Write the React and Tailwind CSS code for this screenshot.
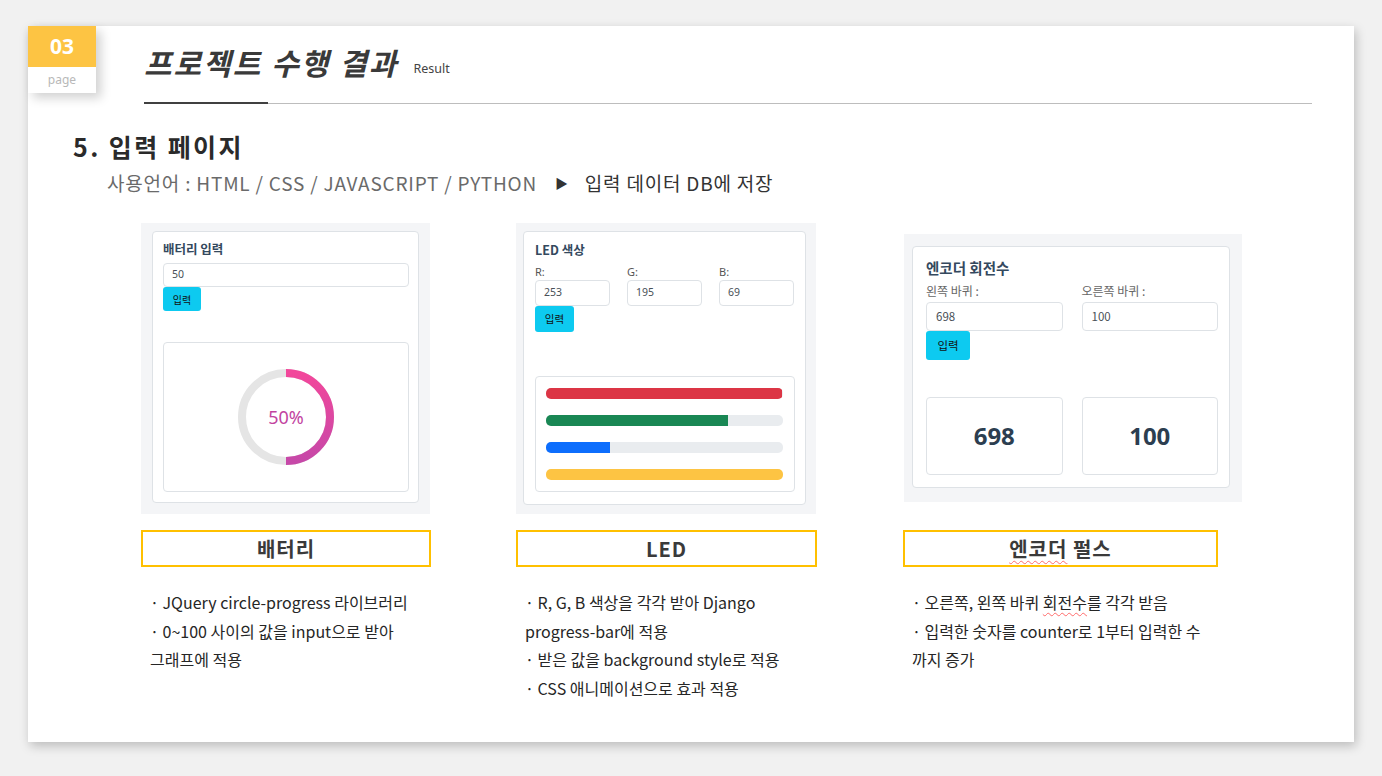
import React from 'react';

const kr = { fontFamily: '"Noto Sans CJK KR", "Noto Sans", sans-serif' };
const ui = { fontFamily: '"Noto Sans", "Noto Sans CJK KR", sans-serif' };

const Field = ({ value, className = '' }) => (
  <div className={`flex items-center border border-[#dee2e6] rounded-[4px] bg-white text-[#495057] ${className}`}>
    {value}
  </div>
);

const Button = ({ className = '' }) => (
  <div className={`flex items-center justify-center bg-[#0dcaf0] rounded-[3px] text-[#111] ${className}`} style={kr}>입력</div>
);

const BatteryPanel = () => (
  <div className="w-[289px] h-[291px] bg-[#f4f5f7] pt-[8px] pl-[11px]" style={ui}>
    <div className="w-[267px] h-[272px] bg-white border border-[#dee2e6] rounded-[4px] pt-[8px] px-[10px]">
      <div className="text-[12.5px] font-bold text-[#34495e] leading-[18px]" style={kr}>배터리 입력</div>
      <Field value="50" className="mt-[5px] w-[246px] h-[24px] pl-[8px] text-[10.5px]" />
      <Button className="w-[38px] h-[24px] text-[10px]" />
      <div className="mt-[31px] w-[246px] h-[150px] border border-[#dee2e6] rounded-[4px] flex items-center justify-center">
        <div className="relative w-[96px] h-[96px]">
          <svg width="96" height="96" viewBox="0 0 96 96">
            <defs>
              <linearGradient id="pinkg" x1="0" y1="0" x2="0" y2="1">
                <stop offset="0" stopColor="#f2479b" />
                <stop offset="1" stopColor="#c648a8" />
              </linearGradient>
            </defs>
            <circle cx="48" cy="48" r="44" fill="none" stroke="#e5e5e5" strokeWidth="8" />
            <path d="M48 4 A44 44 0 0 1 48 92" fill="none" stroke="url(#pinkg)" strokeWidth="8" />
          </svg>
          <div className="absolute inset-0 flex items-center justify-center text-[18px] text-[#c2439f]">50%</div>
        </div>
      </div>
    </div>
  </div>
);

const Bar = ({ color, pct }) => (
  <div className="h-[11px] w-[237px] rounded-[5px] bg-[#e9ecef] overflow-hidden">
    <div className={`h-full ${color}`} style={{ width: `${pct}%` }} />
  </div>
);

const LedPanel = () => (
  <div className="w-[300px] h-[291px] bg-[#f4f5f7] pt-[8px] pl-[7px]" style={ui}>
    <div className="w-[283px] h-[274px] bg-white border border-[#dee2e6] rounded-[4px] pt-[9px] px-[11px]">
      <div className="text-[12.5px] font-bold text-[#34495e] leading-[18px]" style={kr}>LED 색상</div>
      <div className="mt-[4px] grid grid-cols-3 gap-x-[17px] w-[259px] text-[11px] text-[#555]">
        {[['R:', '253'], ['G:', '195'], ['B:', '69']].map(([l, v]) => (
          <div key={l}>
            <div className="leading-[17px]">{l}</div>
            <Field value={v} className="h-[26px] pl-[8px] text-[10.5px]" />
          </div>
        ))}
      </div>
      <Button className="w-[39px] h-[26px] text-[10.5px]" />
      <div className="mt-[44px] w-[260px] h-[116px] border border-[#dee2e6] rounded-[4px] pt-[11px] pl-[10px] flex flex-col gap-[16px]">
        <Bar color="bg-[#dc3545]" pct={99.5} />
        <Bar color="bg-[#198754]" pct={77} />
        <Bar color="bg-[#0d6efd]" pct={27} />
        <Bar color="bg-[#fdc443]" pct={100} />
      </div>
    </div>
  </div>
);

const EncoderPanel = () => (
  <div className="w-[338px] h-[268px] bg-[#f4f5f7] pt-[12px] pl-[8px]" style={ui}>
    <div className="w-[318px] h-[242px] bg-white border border-[#dee2e6] rounded-[4px] pt-[11px] px-[13px]">
      <div className="text-[14.5px] font-bold text-[#34495e] leading-[20px]" style={kr}>엔코더 회전수</div>
      <div className="mt-[5px] grid grid-cols-2 gap-x-[19px] w-[292px] text-[12px] text-[#666]" style={kr}>
        {[['왼쪽 바퀴 :', '698'], ['오른쪽 바퀴 :', '100']].map(([l, v]) => (
          <div key={l}>
            <div className="leading-[16px]">{l}</div>
            <Field value={v} className="mt-[3px] h-[29px] pl-[9px] text-[11.5px]" />
          </div>
        ))}
      </div>
      <Button className="w-[44px] h-[29px] text-[11.5px]" />
      <div className="mt-[37px] grid grid-cols-2 gap-x-[19px] w-[292px]">
        {['698', '100'].map((n) => (
          <div key={n} className="h-[78px] border border-[#dee2e6] rounded-[4px] flex items-center justify-center text-[24px] font-bold text-[#2c3e50]" style={ui}>
            {n}
          </div>
        ))}
      </div>
    </div>
  </div>
);

const Caption = ({ children, w }) => (
  <div className={`${w} h-[37px] border-2 border-[#ffc000] flex items-center justify-center text-[20px] font-bold text-[#3a3a3a] tracking-[1px]`} style={kr}>
    {children}
  </div>
);

const Bullets = ({ lines }) => (
  <div className="mt-[21px] pl-[9px] text-[16px] leading-[28.5px] text-[#262626]" style={kr}>
    {lines.map((l, i) => (
      <div key={i}>{l}</div>
    ))}
  </div>
);

const Squiggle = ({ children }) => (
  <span className="underline decoration-wavy decoration-[#ff6b6b] decoration-1 underline-offset-[3px]">{children}</span>
);

export default function App() {
  return (
    <div className="w-[1382px] h-[776px] bg-[#f1f1f1] pl-[28px] pt-[26px] overflow-hidden" style={kr}>
      <div className="relative w-[1326px] h-[716px] bg-white shadow-[2px_4px_10px_rgba(0,0,0,0.22)]">
        {/* page badge */}
        <div className="absolute left-0 top-0 w-[68px] h-[67px] shadow-[5px_5px_10px_rgba(0,0,0,0.18)]">
          <div className="h-[41px] bg-[#fdc443] flex items-center justify-center text-white text-[21px] font-bold" style={ui}>03</div>
          <div className="h-[26px] bg-white flex items-center justify-center text-[12px] text-[#b8b8b8]" style={ui}>page</div>
        </div>

        {/* header */}
        <div className="pl-[116px] pt-[16px]">
          <div className="flex items-end">
            <div className="text-[30px] leading-[40px] font-bold italic text-[#3a3a3a] tracking-[2px]">프로젝트 수행 결과</div>
            <div className="ml-[15px] mb-[3px] text-[12.5px] text-[#444]" style={ui}>Result</div>
          </div>
          <div className="mt-[21px] relative w-[1168px] h-[1px] bg-[#bdbdbd]">
            <div className="absolute left-0 top-[-1px] w-[124px] h-[2px] bg-[#404040]" />
          </div>
        </div>

        {/* section title */}
        <div className="pl-[45px] mt-[25px] text-[25px] font-bold leading-[34px] text-[#2a2a2a] tracking-[2.4px]">5. 입력 페이지</div>
        <div className="pl-[79px] mt-[6px] text-[19px] leading-[28px] tracking-[0.8px] flex items-center">
          <span className="text-[#6a6a6a]">사용언어 : HTML / CSS / JAVASCRIPT / PYTHON</span>
          <span className="text-[#333] text-[13px] ml-[18px] mr-[16px]">▶</span>
          <span className="text-[#333]">입력 데이터 DB에 저장</span>
        </div>

        {/* columns */}
        <div className="mt-[26px] pl-[113px] flex">
          <div className="w-[290px]">
            <BatteryPanel />
            <div className="mt-[16px]"><Caption w="w-[290px]">배터리</Caption></div>
            <Bullets lines={['· JQuery circle-progress 라이브러리', '· 0~100 사이의 값을 input으로 받아', '그래프에 적용']} />
          </div>
          <div className="w-[301px] ml-[85px]">
            <LedPanel />
            <div className="mt-[16px]"><Caption w="w-[301px]">LED</Caption></div>
            <Bullets
              lines={[
                '· R, G, B 색상을 각각 받아 Django',
                'progress-bar에 적용',
                '· 받은 값을 background style로 적용',
                '· CSS 애니메이션으로 효과 적용',
              ]}
            />
          </div>
          <div className="w-[339px] ml-[86px]">
            <div className="h-[291px] pt-[11px] pl-[1px]">
              <EncoderPanel />
            </div>
            <div className="mt-[16px]">
              <Caption w="w-[315px]">
                <Squiggle>엔코더</Squiggle>&nbsp;펄스
              </Caption>
            </div>
            <Bullets
              lines={[
                <>· 오른쪽, 왼쪽 바퀴 <Squiggle>회전수</Squiggle>를 각각 받음</>,
                '· 입력한 숫자를 counter로 1부터 입력한 수',
                '까지 증가',
              ]}
            />
          </div>
        </div>
      </div>
    </div>
  );
}
